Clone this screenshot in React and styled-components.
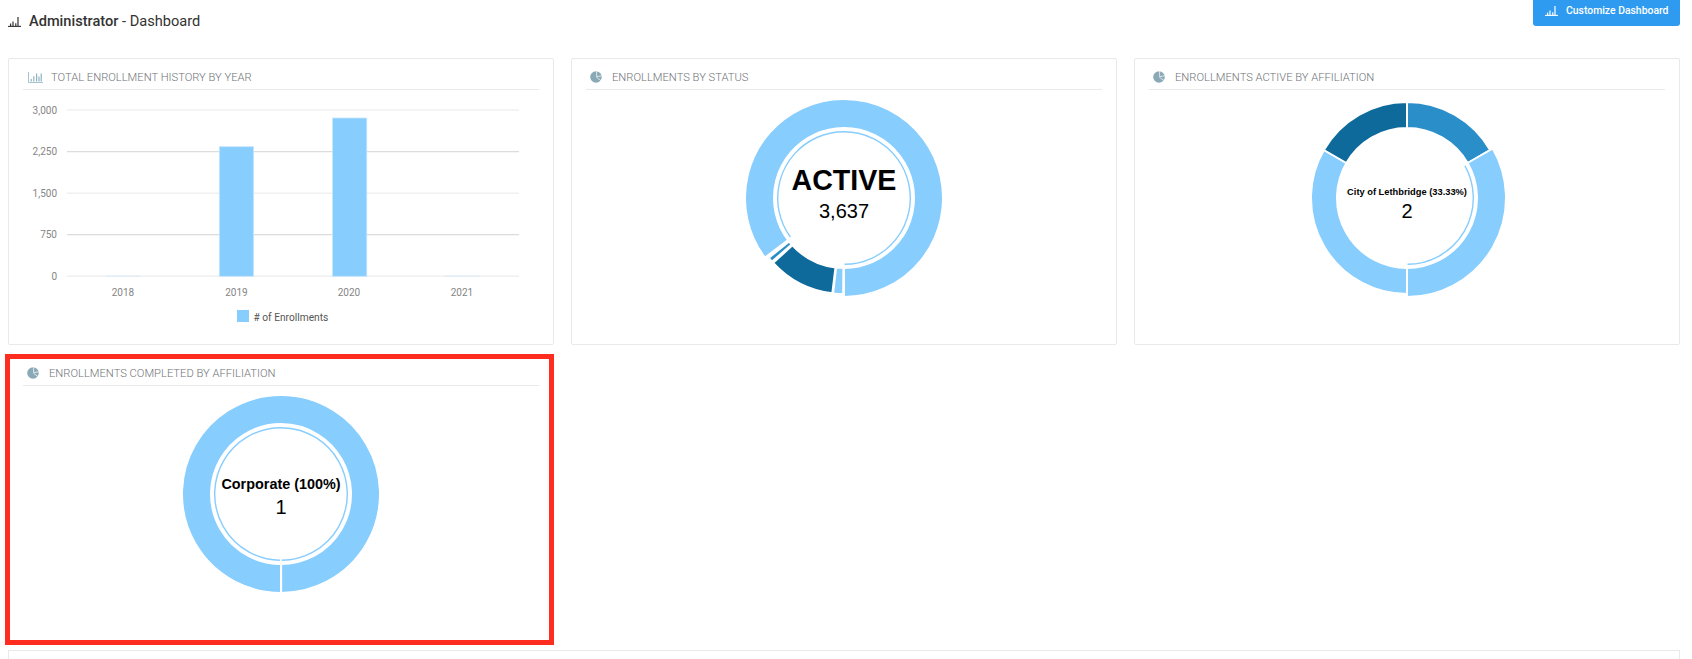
import React from "react";
import styled, { createGlobalStyle } from "styled-components";

const LIGHT = "#87cdfe";
const MID = "#2a8fc9";
const DARK = "#0e6a9a";

// clockwise degrees from 12 o'clock
const point = (r, deg) => {
  const a = ((deg - 90) * Math.PI) / 180;
  return [100 + r * Math.cos(a), 100 + r * Math.sin(a)];
};

const slicePath = (from, to, outer, inner) => {
  const large = to - from > 180 ? 1 : 0;
  const [x1, y1] = point(outer, from);
  const [x2, y2] = point(outer, to);
  const [x3, y3] = point(inner, to);
  const [x4, y4] = point(inner, from);
  return `M${x1} ${y1}A${outer} ${outer} 0 ${large} 1 ${x2} ${y2}L${x3} ${y3}A${inner} ${inner} 0 ${large} 0 ${x4} ${y4}Z`;
};

const arcPath = (from, to, r) => {
  const large = to - from > 180 ? 1 : 0;
  const [x1, y1] = point(r, from);
  const [x2, y2] = point(r, to);
  return `M${x1} ${y1}A${r} ${r} 0 ${large} 1 ${x2} ${y2}`;
};

const BarsIcon = ({ color }) => (
  <svg width="13" height="11" viewBox="0 0 13 11" fill="none">
    <path d="M0 10.4h13" stroke={color} strokeWidth="1.1" />
    <path d="M2.6 10v-2.4M5 10v-4.6M7.8 10v-2.8M10 10v-9" stroke={color} strokeWidth="1.2" />
  </svg>
);

const HistoryIcon = () => (
  <svg width="15" height="11" viewBox="0 0 15 11" fill="none">
    <path d="M0.5 0v10.5H15" stroke="#9dbccb" strokeWidth="0.9" />
    <path d="M3.2 9.6v-2.6M5.8 9.6v-5.4M8.6 9.6v-8M11 9.6v-5M13.2 9.6v-8" stroke="#8fb2c2" strokeWidth="1.2" />
  </svg>
);

const PieIcon = () => (
  <svg width="12" height="12" viewBox="0 0 12 12">
    <circle cx="6" cy="6" r="5.8" fill="#8aa9b6" />
    <path d="M6.6 0V5.6L12 4.8M6.4 6.2L11 9.6" stroke="#fff" strokeWidth="0.7" fill="none" />
  </svg>
);

const Donut = ({ slices, title, titleSize, titleY, value }) => (
  <DonutSvg width="200" height="200" viewBox="0 0 200 200">
    {slices.map((s) => (
      <path
        key={s.from}
        d={slicePath(s.from, s.to, s.active ? 99 : 96, 70)}
        fill={s.color}
        stroke="#fff"
        strokeWidth="2"
      />
    ))}
    {slices
      .filter((s) => s.active)
      .map((s) => (
        <path
          key={s.from}
          d={arcPath(s.from + 1, s.to - 0.5, 66.3)}
          fill="none"
          stroke={LIGHT}
          strokeWidth="1.4"
        />
      ))}
    <CenterTitle x="100" y={titleY} $size={titleSize}>
      {title}
    </CenterTitle>
    <CenterValue x="100" y="120">
      {value}
    </CenterValue>
  </DonutSvg>
);

const statusSlices = [
  { from: 233, to: 540, color: LIGHT, active: true },
  { from: 180.5, to: 186.5, color: LIGHT },
  { from: 187, to: 227.5, color: DARK },
  { from: 228.5, to: 231.5, color: MID },
];

const activeSlices = [
  { from: 0, to: 60, color: MID },
  { from: 60, to: 180, color: LIGHT, active: true },
  { from: 180, to: 300, color: LIGHT },
  { from: 300, to: 360, color: DARK },
];

const completedSlices = [{ from: 180, to: 539.9, color: LIGHT, active: true }];

const gridLines = [
  { y: 0, label: "3,000", color: "#f0f0f0" },
  { y: 41.6, label: "2,250", color: "#dcdcdc" },
  { y: 83.2, label: "1,500", color: "#f0f0f0" },
  { y: 124.6, label: "750", color: "#dcdcdc" },
  { y: 166.3, label: "0", color: "#f0f0f0" },
];

const BarChart = () => (
  <ChartSvg width="516" height="230" viewBox="0 0 516 230">
    {gridLines.map((l) => (
      <g key={l.label}>
        <line x1="44" x2="496" y1={l.y + 11} y2={l.y + 11} stroke={l.color} strokeWidth="1.4" />
        <AxisLabel x="34" y={l.y + 14.6} textAnchor="end">
          {l.label}
        </AxisLabel>
      </g>
    ))}
    <rect x="82.7" y="176.6" width="35" height="1" fill="#dcebf5" />
    <rect x="196.3" y="47.7" width="34.3" height="129.6" fill={LIGHT} stroke="#c6e6fd" strokeWidth="0.8" />
    <rect x="309.5" y="19" width="34.3" height="158.3" fill={LIGHT} stroke="#c6e6fd" strokeWidth="0.8" />
    <rect x="421.6" y="176.6" width="35" height="1" fill="#dcebf5" />
    {[
      ["2018", 100],
      ["2019", 213.4],
      ["2020", 326],
      ["2021", 439],
    ].map(([year, x]) => (
      <AxisLabel key={year} x={x} y="196.5" textAnchor="middle">
        {year}
      </AxisLabel>
    ))}
    <rect x="214" y="211" width="12" height="12" fill={LIGHT} />
    <LegendLabel x="230.5" y="222">
      # of Enrollments
    </LegendLabel>
  </ChartSvg>
);

const App = () => {
  return (
    <>
      <GlobalStyle />
      <Page>
        <TopBar>
          <PageTitle>
            <BarsIcon color="#333" />
            <span>
              <strong>Administrator</strong> - Dashboard
            </span>
          </PageTitle>
          <CustomizeButton>
            <BarsIcon color="#fff" />
            Customize Dashboard
          </CustomizeButton>
        </TopBar>
        <Grid>
          <Card>
            <CardHeader>
              <IconSlot $width="24px" $inset="1px">
                <HistoryIcon />
              </IconSlot>
              <CardTitle>TOTAL ENROLLMENT HISTORY BY YEAR</CardTitle>
            </CardHeader>
            <BarChart />
          </Card>
          <Card>
            <CardHeader>
              <IconSlot>
                <PieIcon />
              </IconSlot>
              <CardTitle>ENROLLMENTS BY STATUS</CardTitle>
            </CardHeader>
            <DonutBody>
              <Donut slices={statusSlices} title="ACTIVE" titleSize="28.6px" titleY="92" value="3,637" />
            </DonutBody>
          </Card>
          <Card>
            <CardHeader>
              <IconSlot>
                <PieIcon />
              </IconSlot>
              <CardTitle>ENROLLMENTS ACTIVE BY AFFILIATION</CardTitle>
            </CardHeader>
            <DonutBody>
              <Donut slices={activeSlices} title="City of Lethbridge (33.33%)" titleSize="9.3px" titleY="97" value="2" />
            </DonutBody>
          </Card>
          <Card $flagged>
            <CardHeader $compact>
              <IconSlot>
                <PieIcon />
              </IconSlot>
              <CardTitle>ENROLLMENTS COMPLETED BY AFFILIATION</CardTitle>
            </CardHeader>
            <DonutBody>
              <Donut slices={completedSlices} title="Corporate (100%)" titleSize="14.4px" titleY="95" value="1" />
            </DonutBody>
          </Card>
        </Grid>
        <NextCard />
      </Page>
    </>
  );
};

const GlobalStyle = createGlobalStyle`
  html, body {
    margin: 0;
    background: #fff;
    overflow: hidden;
  }
  body {
    font-family: Roboto, "Liberation Sans", sans-serif;
  }
`;

const Page = styled.div`
  width: 1692px;
  height: 659px;
  padding: 0 12px 0 8px;
  box-sizing: border-box;
  overflow: hidden;
`;

const TopBar = styled.div`
  display: flex;
  justify-content: space-between;
  align-items: flex-start;
  height: 58px;
`;

const PageTitle = styled.h1`
  display: flex;
  align-items: center;
  gap: 8px;
  margin: 12px 0 0;
  font-size: 14.6px;
  line-height: 18px;
  font-weight: 400;
  color: #333;

  strong {
    font-weight: 500;
  }
`;

const CustomizeButton = styled.button`
  display: flex;
  align-items: center;
  gap: 8px;
  width: 147px;
  height: 26px;
  padding: 0 0 5px 12px;
  border: none;
  border-radius: 0 0 3px 3px;
  background: #2f9bf0;
  color: #fff;
  font-family: Roboto, sans-serif;
  font-size: 10.4px;
  font-weight: 500;
`;

const Grid = styled.div`
  display: grid;
  grid-template-columns: repeat(3, 1fr);
  grid-template-rows: 287px 291px;
  column-gap: 17px;
  row-gap: 9px;
`;

const Card = styled.section`
  box-sizing: border-box;
  background: #fff;
  border: ${(p) => (p.$flagged ? "5px solid #ff2d20" : "1px solid #e7e9eb")};
  border-radius: ${(p) => (p.$flagged ? "0" : "2px")};
  margin-left: ${(p) => (p.$flagged ? "-3px" : "0")};
  padding: ${(p) => (p.$flagged ? "0 10px 0 13px" : "0 14px")};
  overflow: hidden;
`;

const CardHeader = styled.div`
  display: flex;
  align-items: flex-end;
  box-sizing: border-box;
  height: ${(p) => (p.$compact ? "27px" : "31px")};
  padding: 0 0 4px 4px;
  border-bottom: 1px solid #e7e9eb;
`;

const IconSlot = styled.span`
  display: flex;
  align-items: center;
  box-sizing: border-box;
  width: ${(p) => p.$width || "22px"};
  height: 14px;
  padding-left: ${(p) => p.$inset || "0"};
  margin-bottom: 1px;
`;

const CardTitle = styled.h2`
  margin: 0;
  font-size: 11.2px;
  line-height: 14px;
  font-weight: 300;
  color: #6f7478;
`;

const DonutBody = styled.div`
  display: flex;
  justify-content: center;
  padding-top: 8px;
`;

const DonutSvg = styled.svg`
  display: block;
`;

const CenterTitle = styled.text`
  font-family: "Liberation Sans", Arial, sans-serif;
  font-size: ${(p) => p.$size};
  font-weight: 700;
  fill: #000;
  text-anchor: middle;
`;

const CenterValue = styled.text`
  font-family: "Liberation Sans", Arial, sans-serif;
  font-size: 20px;
  fill: #000;
  text-anchor: middle;
`;

const ChartSvg = styled.svg`
  display: block;
  margin-top: 9px;
`;

const AxisLabel = styled.text`
  font-family: Roboto, sans-serif;
  font-size: 10px;
  fill: #858585;
`;

const LegendLabel = styled.text`
  font-family: Roboto, sans-serif;
  font-size: 10.2px;
  fill: #555;
`;

const NextCard = styled.div`
  height: 60px;
  margin-top: 5px;
  border: 1px solid #e7e9eb;
  background: #fff;
`;

export default App;
